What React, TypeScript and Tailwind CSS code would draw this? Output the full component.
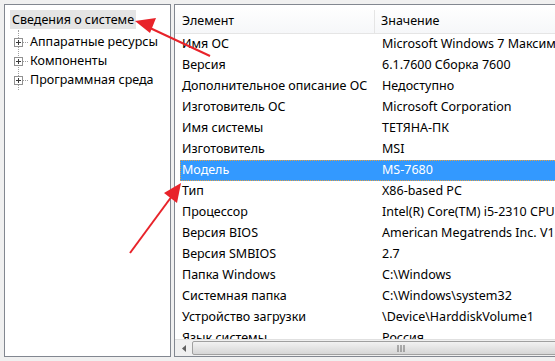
const rows: [string, string][] = [
  ['Имя ОС', 'Microsoft Windows 7 Максимальная'],
  ['Версия', '6.1.7600 Сборка 7600'],
  ['Дополнительное описание ОС', 'Недоступно'],
  ['Изготовитель ОС', 'Microsoft Corporation'],
  ['Имя системы', 'ТЕТЯНА-ПК'],
  ['Изготовитель', 'MSI'],
  ['Модель', 'MS-7680'],
  ['Тип', 'X86-based PC'],
  ['Процессор', 'Intel(R) Core(TM) i5-2310 CPU @ 2.90GHz'],
  ['Версия BIOS', 'American Megatrends Inc. V1.9'],
  ['Версия SMBIOS', '2.7'],
  ['Папка Windows', 'C:\\Windows'],
  ['Системная папка', 'C:\\Windows\\system32'],
  ['Устройство загрузки', '\\Device\\HarddiskVolume1'],
  ['Язык системы', 'Россия'],
];

const tree = ['Аппаратные ресурсы', 'Компоненты', 'Программная среда'];

const font = { fontFamily: '"Noto Sans", "Segoe UI", sans-serif' };

function PlusBox() {
  return (
    <span className="flex h-[9px] w-[9px] items-center justify-center border border-[#919191] bg-white">
      <svg width="5" height="5" viewBox="0 0 5 5">
        <path d="M0 2.5h5M2.5 0v5" stroke="#3b3b3b" strokeWidth="1" />
      </svg>
    </span>
  );
}

export default function App() {
  return (
    <div className="relative h-[361px] w-[555px] overflow-hidden bg-[#f0f0f0] text-[12.5px] text-black" style={font}>
      <div className="flex h-full gap-[3px] p-[4px] pr-0">
        {/* tree */}
        <div className="w-[167px] shrink-0 border border-[#828790] bg-white pl-[5px] pt-[5px]">
          <div className="inline-block h-[19px] bg-[#e4e4e4] px-[2px] leading-[19px]">Сведения о системе</div>
          <div className="ml-[8px] border-l border-dotted border-[#a0a0a0] pt-[3px]">
            {tree.map((t) => (
              <div key={t} className="flex h-[19px] items-center">
                <span className="-ml-[5px]">
                  <PlusBox />
                </span>
                <span className="w-[5px] border-t border-dotted border-[#a0a0a0]" />
                <span className="pl-[2px]">{t}</span>
              </div>
            ))}
          </div>
        </div>

        {/* list */}
        <div className="flex w-[420px] shrink-0 flex-col border border-[#828790] bg-white">
          <div className="flex h-[29px] shrink-0 border-b border-[#e5e5e5] bg-gradient-to-b from-white to-[#f6f7f9] pt-[5px]">
            <div className="flex w-[200px] items-center border-r border-[#e5e5e5] pl-[7px]">Элемент</div>
            <div className="flex items-center pl-[6px]">Значение</div>
          </div>
          <div className="flex-1 overflow-hidden">
            {rows.map(([k, v]) => {
              const sel = k === 'Модель';
              return (
                <div
                  key={k}
                  className={
                    sel
                      ? 'ml-[5px] flex h-[21px] items-center whitespace-nowrap border border-dotted border-[#e8a040] bg-[#3399ff] text-white'
                      : 'ml-[5px] flex h-[21px] items-center whitespace-nowrap border border-transparent'
                  }
                >
                  <div className="w-[195px] shrink-0 pl-[1px]">{k}</div>
                  <div className="pl-[6px]">{v}</div>
                </div>
              );
            })}
          </div>
          <div className="flex h-[17px] shrink-0 items-stretch border-t border-[#e0e0e0] bg-[#f0f0f0]">
            <div className="flex w-[17px] items-center justify-center">
              <svg width="4" height="7" viewBox="0 0 4 7">
                <path d="M4 0v7L0 3.5z" fill="#606060" />
              </svg>
            </div>
            <div className="my-[1px] flex flex-1 items-center justify-center rounded-[2px] border border-[#a0a0a0] bg-gradient-to-b from-[#f2f2f2] to-[#d6d6d6]">
              <svg width="8" height="7" viewBox="0 0 8 7" className="ml-[16px]">
                <path d="M1 0v7M4 0v7M7 0v7" stroke="#6a6a6a" strokeWidth="1" />
              </svg>
            </div>
          </div>
        </div>
      </div>

      {/* red arrows */}
      <svg className="pointer-events-none absolute left-0 top-0" width="555" height="361">
        <line x1="210" y1="56" x2="150" y2="28" stroke="#e8232a" strokeWidth="2" />
        <path d="M135 21 L156 18 L150 33 Z" fill="#e8232a" />
        <line x1="130" y1="253" x2="172" y2="196" stroke="#e8232a" strokeWidth="2" />
        <path d="M181 183 L177 203 L164 193 Z" fill="#e8232a" />
      </svg>
    </div>
  );
}
